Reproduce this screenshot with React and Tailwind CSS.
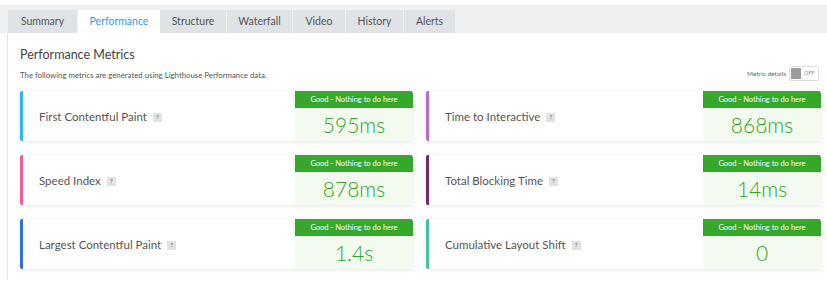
import React from 'react';

const tabs = [
  { name: 'Summary', w: 'w-[70px]' },
  { name: 'Performance', w: 'w-[82px]', active: true },
  { name: 'Structure', w: 'w-[67px]' },
  { name: 'Waterfall', w: 'w-[66px]' },
  { name: 'Video', w: 'w-[53px]' },
  { name: 'History', w: 'w-[58px]' },
  { name: 'Alerts', w: 'w-[52px]' },
];

const metrics = [
  { label: 'First Contentful Paint', value: '595ms', bar: 'border-l-[#2bb5f3]' },
  { label: 'Time to Interactive', value: '868ms', bar: 'border-l-[#b86bc9]' },
  { label: 'Speed Index', value: '878ms', bar: 'border-l-[#ef5e97]' },
  { label: 'Total Blocking Time', value: '14ms', bar: 'border-l-[#6b2a72]' },
  { label: 'Largest Contentful Paint', value: '1.4s', bar: 'border-l-[#3170de]' },
  { label: 'Cumulative Layout Shift', value: '0', bar: 'border-l-[#46c29b]' },
];

const MetricCard = ({ label, value, bar }) => (
  <div className={`flex h-[50px] bg-white border-l-[3px] ${bar} rounded-[2px] shadow-[0_1px_4px_rgba(0,0,0,0.10)]`}>
    <div className="flex flex-1 items-center pl-[16px] pt-[1px] text-[11.5px] text-[#555]">
      {label}
      <span className="ml-[6px] mt-[1px] flex h-[9px] w-[9px] items-center justify-center bg-[#e2e2e2] text-[6px] font-bold leading-none text-[#777]">?</span>
    </div>
    <div className="flex w-[118px] flex-col rounded-r-[3px] bg-[#f3faf0]">
      <div className="flex h-[17px] items-center justify-center rounded-tr-[3px] bg-[#35a82b] text-[7.5px] text-white">
        Good - Nothing to do here
      </div>
      <div className="flex flex-1 items-center justify-center pb-[1px] text-[21px] font-light leading-none text-[#2fa52a]">
        {value}
      </div>
    </div>
  </div>
);

export default function App() {
  return (
    <div className="h-[285px] w-[827px] overflow-hidden bg-white font-['Lato',sans-serif]">
      {/* Tab strip */}
      <div className="mt-[5px] flex h-[28px] items-end bg-[#f0f0f0] pl-[8px]">
        {tabs.map((t) => (
          <div
            key={t.name}
            className={`flex h-[23px] ${t.w} items-center justify-center text-[10.5px] ${
              t.active ? 'bg-white text-[#2a9ee0]' : 'border-r border-[#eef0f1] bg-[#dfe3e6] text-[#555]'
            }`}
          >
            {t.name}
          </div>
        ))}
      </div>

      {/* Panel */}
      <div className="ml-[7px] h-[247px] border-l border-[#e6e6e6] pl-[12px] pr-[7px] pt-[12px]">
        <h2 className="text-[12.5px] leading-[20px] text-[#444]">Performance Metrics</h2>
        <div className="mt-[1px] flex h-[15px] items-center justify-between">
          <p className="pt-[5px] text-[7.8px] text-[#555]">The following metrics are generated using Lighthouse Performance data.</p>
          <div className="flex items-center gap-[3px] pr-[1px] text-[6.5px] text-[#666]">
            <span>Metric details</span>
            <div className="flex h-[15px] w-[30px] items-center rounded-[2px] border border-[#dcdcdc] bg-white pl-[1px]">
              <div className="h-[11px] w-[10px] bg-[#9c9c9c]" />
              <span className="ml-[3px] text-[5.5px] text-[#8a8fa8]">OFF</span>
            </div>
          </div>
        </div>
        <div className="mt-[10px] grid grid-cols-[393px_395px] gap-x-[13px] gap-y-[14px]">
          {metrics.map((m) => (
            <MetricCard key={m.label} {...m} />
          ))}
        </div>
      </div>
    </div>
  );
}
